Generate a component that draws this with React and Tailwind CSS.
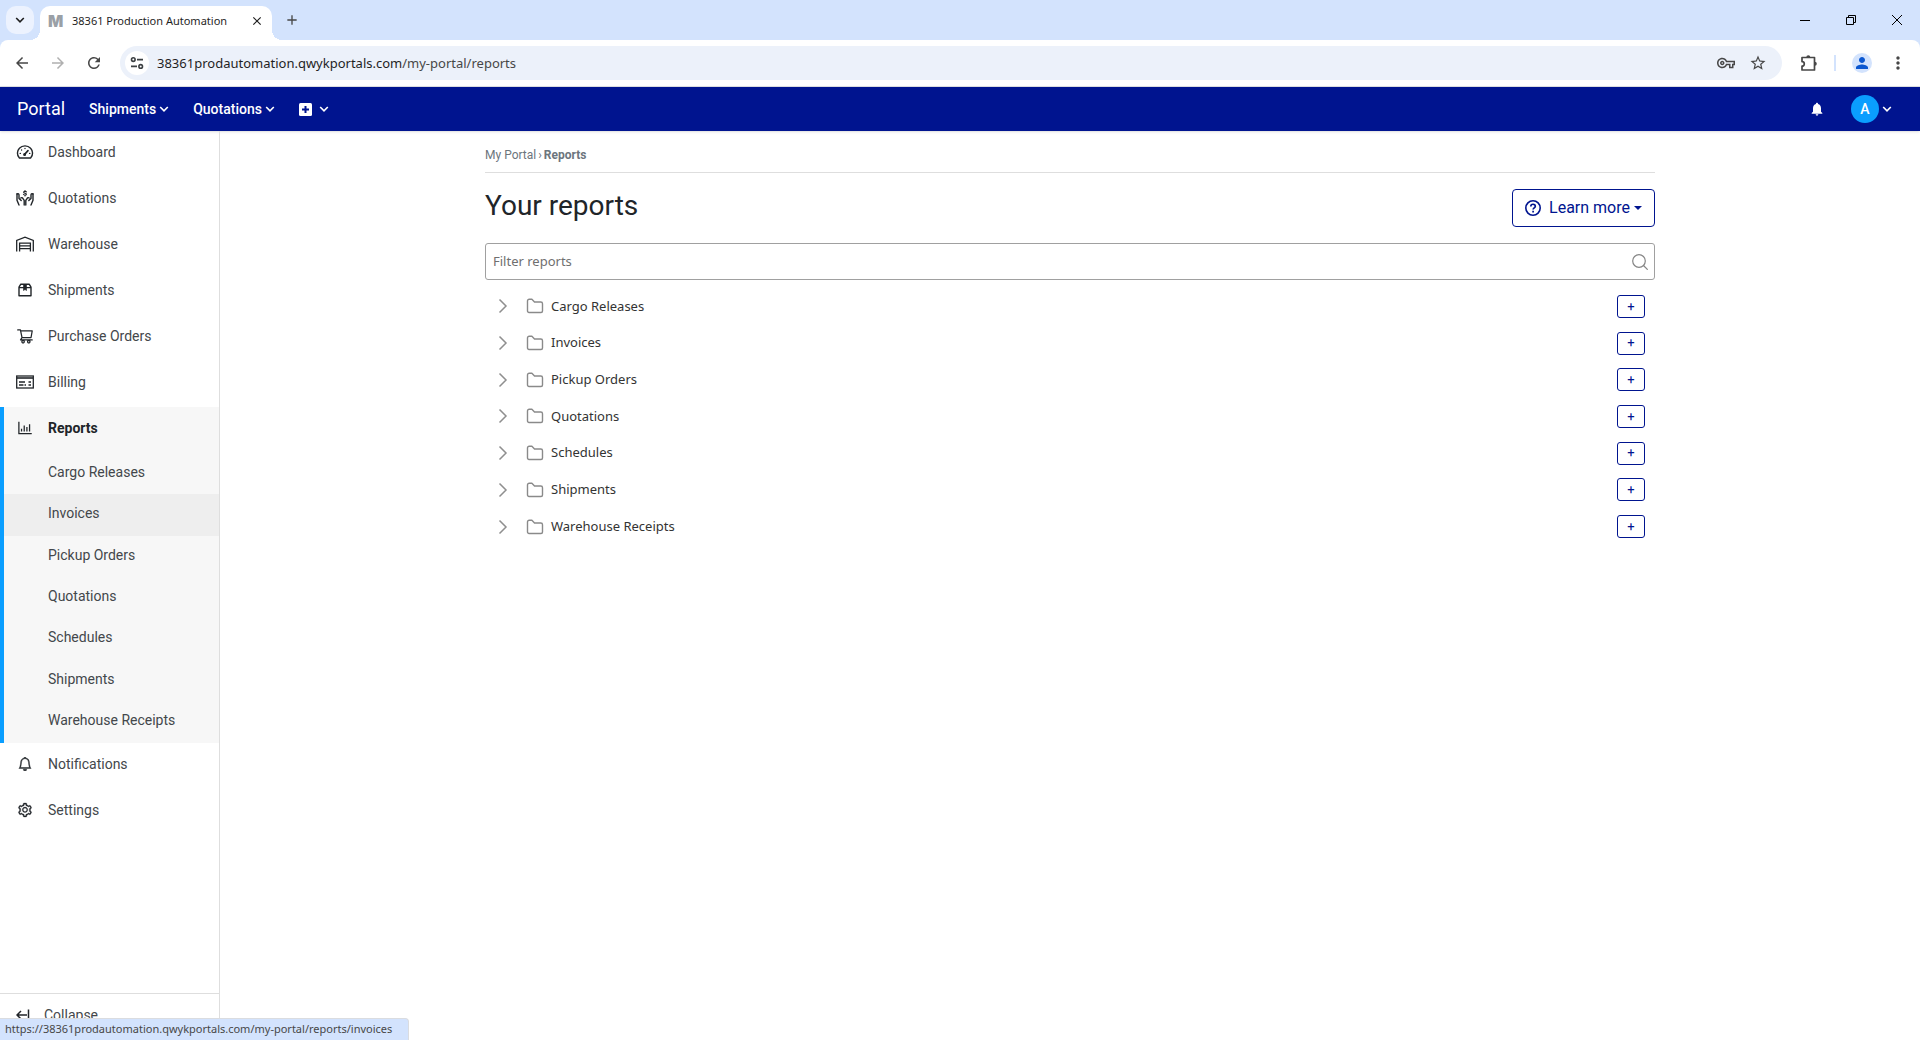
import React from "react";
import { AiOutlineShoppingCart, AiOutlineBarChart, AiOutlineSetting } from "react-icons/ai";
import { BsBell } from "react-icons/bs";
import { MdArrowBack, MdArrowForward, MdRefresh, MdOutlineVpnKey, MdStarBorder, MdMoreVert, MdPerson, MdNotifications, MdClose, MdAdd } from "react-icons/md";

const Chevron = ({ className }) => (
  <svg viewBox="0 0 10 10" className={className} fill="none" stroke="currentColor" strokeWidth="1.6">
    <path d="M1.2 3l3.8 3.8L8.8 3" />
  </svg>
);

const PlusBox = () => (
  <svg viewBox="0 0 13 13" className="size-[13px]">
    <rect width="13" height="13" rx="1.500" fill="white" />
    <path d="M6.500 3v7M3 6.500h7" stroke="#00148f" strokeWidth="2" />
  </svg>
);

const HelpIcon = () => (
  <svg viewBox="0 0 16 16" className="mr-2 size-4" fill="none" stroke="currentColor" strokeWidth="1.600">
    <circle cx="8" cy="8" r="7.200" />
    <path d="M5.800 6.500c0-3 4.500-2.900 4.500-.3 0 1.600-2.200 1.700-2.200 3.400M8.100 10.700v1.700" strokeWidth="1.700" />
  </svg>
);

const GaugeIcon = () => (
  <svg viewBox="0 0 18 16" className="h-4 w-[18px]" fill="none" stroke="currentColor" strokeWidth="1.4" strokeLinecap="round" strokeLinejoin="round">
    <path d="M3.400 14C.6 11.200 1 6.800 3.400 4.300c3-3.300 8.200-3.300 11.200 0 2.400 2.500 2.800 6.900 0 9.700z" />
    <path d="M8.600 10.400L12 6.600" strokeWidth="1.600" />
    <path d="M9 4.400v.2M5.600 6v.1M4.200 9.400h.2M13.600 9.400h.2" />
    <circle cx="8.600" cy="10.400" r="0.800" />
  </svg>
);

const QuoteIcon = () => (
  <svg viewBox="0 0 18 16" className="h-4 w-[18px]" fill="none" stroke="currentColor" strokeWidth="1.4" strokeLinecap="round" strokeLinejoin="round">
    <path d="M1 4v6.200L3 15M17 4v6.200L15 15" />
    <path d="M1 4c1.400-.6 2 .1 2 1v3.400l2.200 2.200M17 4c-1.400-.6-2 .1-2 1v3.400l-2.200 2.200" />
    <path d="M4.800 8c.8-.8 1.500-.3 2 .3l1.400 2V15M13.200 8c-.8-.8-1.500-.3-2 .3l-1.400 2V15" />
    <path d="M10.400 1.900c-.6-.8-2.800-.7-2.800.4 0 1.200 2.800.7 2.800 1.900 0 1.100-2.200 1.200-2.900.3M9 .5v.6M9 5.200v.8" strokeWidth="1.100" />
  </svg>
);

const WarehouseIcon = () => (
  <svg viewBox="0 0 18 16" className="h-4 w-[18px]" fill="none" stroke="currentColor" strokeWidth="1.300">
    <path d="M.7 15.500V4.400L9 1.200l8.300 3.200v11.100" />
    <path d="M3.600 15.500V7.200h10.800v8.300M3.600 9.900h10.800M3.600 12.700h10.800" />
  </svg>
);

const BoxIcon = () => (
  <svg viewBox="0 0 14 14" className="size-3.5" fill="none" stroke="currentColor" strokeWidth="1.4" strokeLinejoin="round">
    <path d="M1 4.200v8.600h12V4.200L11.200 1.200H2.800zM1 4.600h12" />
    <path d="M5.500 1.500h3v6L7 6.500l-1.500 1z" fill="currentColor" strokeWidth="0.600" />
  </svg>
);

const BillIcon = () => (
  <svg viewBox="0 0 18 14" className="h-3.5 w-[18px]" fill="none" stroke="currentColor" strokeWidth="1.300">
    <rect x="0.700" y="1" width="16.600" height="12" />
    <path d="M1 3h16" strokeWidth="1.600" />
    <path d="M3 7h6M3 10h4.500M8.500 10H10M12.500 7H15M12.500 10H15" />
  </svg>
);

const Tune = () => (
  <svg viewBox="0 0 14 14" className="size-3.5" fill="none" stroke="#3c4043" strokeWidth="1.600">
    <circle cx="3.300" cy="3.600" r="1.800" />
    <path d="M7 3.600h6M1 10.400h6" />
    <circle cx="10.700" cy="10.400" r="1.800" />
  </svg>
);

const Puzzle = () => (
  <svg viewBox="0 0 18 18" className="size-[18px]" fill="none" stroke="#474747" strokeWidth="1.700" strokeLinejoin="round">
    <path d="M2 3.500h12.500V16H2v-3.800a2.300 2.300 0 0 0 0-4.600z" />
    <path d="M6.300 3.200a2 2 0 0 1 4 0zM14.800 7.800a2 2 0 0 1 0 4z" fill="#474747" stroke="none" />
  </svg>
);

const Folder = () => (
  <svg viewBox="0 0 18 16" className="h-4 w-[18px] shrink-0" fill="none" stroke="#8a8a8a" strokeWidth="1.400" strokeLinejoin="round">
    <path d="M1.500 13V3a1.700 1.700 0 0 1 1.700-1.700h2.700L8.500 4h6.300a1.700 1.700 0 0 1 1.700 1.700V13a1.500 1.500 0 0 1-1.500 1.500H3A1.500 1.500 0 0 1 1.500 13z" />
  </svg>
);

const groups = ["Cargo Releases", "Invoices", "Pickup Orders", "Quotations", "Schedules", "Shipments", "Warehouse Receipts"];

const navTop = [
  ["Dashboard", <GaugeIcon />],
  ["Quotations", <QuoteIcon />],
  ["Warehouse", <WarehouseIcon />],
  ["Shipments", <BoxIcon />],
  ["Purchase Orders", <AiOutlineShoppingCart className="size-[18px]" />],
  ["Billing", <BillIcon />],
];

const navBottom = [
  ["Notifications", <BsBell className="size-3.5" strokeWidth="0.5" />],
  ["Settings", <AiOutlineSetting className="size-4" strokeWidth="20" />],
];

function NavItem({ label, icon, active }) {
  return (
    <a href="#" className={active ? "flex h-[46px] items-center pb-1 font-bold text-[#212529]" : "flex h-[46px] items-center pb-1 pl-1"}>
      <span className="ml-3 mr-3.5 flex w-[18px] shrink-0 justify-center text-[#212529]">{icon}</span>
      {label}
    </a>
  );
}

function BrowserChrome() {
  return (
    <header className="bg-[#d3e3fd] font-['Noto_Sans',sans-serif] text-[#1f1f1f]">
      <div className="flex h-10 items-end">
        <button aria-label="Search tabs" className="mb-1.5 ml-1.5 flex size-7 items-center justify-center rounded-[10px] bg-[#ecf2fe]">
          <Chevron className="size-2.5" />
        </button>
        <div className="relative ml-1.5 flex h-[34px] w-[232px] items-center rounded-t-[10px] bg-white pb-1 pl-2 pr-2 text-[11px] before:absolute before:-left-2.5 before:bottom-0 before:size-2.5 before:bg-[radial-gradient(circle_at_0_0,transparent_10px,white_10px)] after:absolute after:-right-2.5 after:bottom-0 after:size-2.5 after:bg-[radial-gradient(circle_at_100%_0,transparent_10px,white_10px)]">
          <span className="w-4 font-['Inter',sans-serif] text-base leading-4 font-black text-[#9aa0a6]">M</span>
          <span className="ml-2 grow whitespace-nowrap">38361 Production Automation</span>
          <button aria-label="Close tab"><MdClose className="size-3.5" /></button>
        </div>
        <button aria-label="New tab" className="mb-3 ml-3 text-[#474747]"><MdAdd className="size-4" /></button>
        <div className="mb-2 ml-auto flex gap-[22px] pr-[11px]">
          <button aria-label="Minimize" className="flex size-6 items-center justify-center"><svg viewBox="0 0 10 10" className="size-2.5"><path d="M0 5.500h10" stroke="black" /></svg></button>
          <button aria-label="Restore" className="flex size-6 items-center justify-center"><svg viewBox="0 0 10 10" className="size-2.5" fill="none" stroke="black"><path d="M.5 2.500h7v7h-7zM2.500 2.500v-2h7v7h-2" /></svg></button>
          <button aria-label="Close window" className="flex size-6 items-center justify-center"><svg viewBox="0 0 10 10" className="size-2.5" stroke="black"><path d="M0 0l10 10M10 0L0 10" /></svg></button>
        </div>
      </div>
      <div className="flex h-[47px] items-center rounded-t-lg border-b border-[#dfe1e5] bg-white pl-[13px] text-[#474747]">
        <button aria-label="Back"><MdArrowBack className="size-[18px]" /></button>
        <button aria-label="Forward" className="ml-[18px] text-[#b0b0b0]"><MdArrowForward className="size-[18px]" /></button>
        <button aria-label="Reload" className="ml-[18px]"><MdRefresh className="size-[18px]" /></button>
        <div className="ml-[17px] flex h-[34px] grow items-center rounded-full bg-[#ecf1fa] pl-[5px] pr-[15px]">
          <button aria-label="Site information" className="flex size-6 items-center justify-center rounded-full bg-white"><Tune /></button>
          <div className="ml-2 grow text-[13px] leading-5"><span className="text-[#1f1f1f]">38361prodautomation.qwykportals.com</span><span>/my-portal/reports</span></div>
          <button aria-label="Passwords"><MdOutlineVpnKey className="size-[18px]" /></button>
          <button aria-label="Bookmark" className="ml-3.5"><MdStarBorder className="size-[18px]" /></button>
        </div>
        <button aria-label="Extensions" className="ml-[18px]"><Puzzle /></button>
        <span className="ml-4 h-4 w-0.5 bg-[#d3e3fd]" />
        <button aria-label="Profile" className="ml-4 flex size-5 items-center justify-center rounded-full bg-[#d3e3fd] text-[#0b57d0]"><MdPerson className="size-[18px]" /></button>
        <button aria-label="Menu" className="ml-4 mr-3"><MdMoreVert className="size-5" /></button>
      </div>
    </header>
  );
}

function NavBar() {
  return (
    <nav className="flex h-11 items-center bg-[#00148f] pl-[17px] pr-7 text-sm font-medium text-white shadow">
      <a href="#" className="text-lg font-normal">Portal</a>
      <button className="ml-6 flex items-center gap-[3px]">Shipments<Chevron className="size-2.5" /></button>
      <button className="ml-6 flex items-center gap-[3px]">Quotations<Chevron className="size-2.5" /></button>
      <button aria-label="Create" className="ml-6 flex items-center gap-[7px]"><PlusBox /><Chevron className="size-2.5" /></button>
      <button aria-label="Notifications" className="ml-auto"><MdNotifications className="size-4" /></button>
      <button className="ml-[26px] flex items-center gap-[3px]"><span className="flex size-7 items-center justify-center rounded-full bg-[#0a9eff]">A</span><Chevron className="size-2.5" /></button>
    </nav>
  );
}

function Sidebar() {
  return (
    <aside className="flex w-[220px] shrink-0 flex-col border-r border-[#dedede] text-sm text-[#43474b]">
      {navTop.map(([label, icon]) => <NavItem key={label} label={label} icon={icon} />)}
      <div className="border-l-4 border-[#0a9eff] bg-[#f7f7f7]">
        <NavItem label="Reports" icon={<AiOutlineBarChart className="size-[18px]" />} active />
        <div className="grid h-[290px] grid-rows-7">
          {groups.map((g) => (
            <a key={g} href="#" className={g === "Invoices" ? "flex items-center bg-[#eeeeee] pl-11 pb-1" : "flex items-center pl-11 pb-1"}>{g}</a>
          ))}
        </div>
      </div>
      {navBottom.map(([label, icon]) => <NavItem key={label} label={label} icon={icon} />)}
      <button className="mt-auto flex h-[47px] items-center gap-3.5 border-t border-[#dedede] pb-1 pl-4">
        <svg viewBox="0 0 14 14" className="size-3.5" fill="none" stroke="#212529" strokeWidth="1.500"><path d="M12.500 1.500v11M11 7H1M5 3L1 7l4 4" /></svg>
        Collapse
      </button>
    </aside>
  );
}

function Reports() {
  return (
    <main className="grow">
      <div className="mx-auto max-w-[1170px]">
        <div className="flex h-[42px] items-center gap-0.5 border-b border-[#dedede] pt-1.5 text-xs text-[#6c757d]">
          <a href="#">My Portal</a><span>›</span><b>Reports</b>
        </div>
        <div className="mt-4 flex h-[38px] items-center justify-between">
          <h1 className="pb-1 text-[28px] leading-8 text-[#212529]">Your reports</h1>
          <button className="flex h-[38px] items-center rounded border border-[#00148f] px-3 text-base text-[#00148f]">
            <HelpIcon />Learn more
            <span className="ml-1 border-x-4 border-t-4 border-x-transparent border-t-[#00148f]" />
          </button>
        </div>
        <label className="mt-4 flex h-[37px] items-center rounded-[3px] border border-[#a0a0a0] pl-[7px] pr-1.5 font-['Noto_Sans',sans-serif] text-[13px]">
          <input aria-label="Filter reports" placeholder="Filter reports" className="grow outline-none placeholder:text-[#6f6f6f]" />
          <svg viewBox="0 0 16 16" className="size-4" fill="none" stroke="#858585" strokeWidth="1.200"><circle cx="7" cy="7" r="6.300" /><path d="M11.500 11.500L15.700 15.700" /></svg>
        </label>
        <ul className="mt-2 grid h-[257px] grid-rows-7 font-['Noto_Sans',sans-serif] text-[13px] text-[#333333]">
          {groups.map((g) => (
            <li key={g} className="flex items-center pl-3 pr-2.5">
              <button aria-label={"Expand " + g}>
                <svg viewBox="0 0 12 16" className="h-4 w-3" fill="none" stroke="#8f8f8f" strokeWidth="1.500"><path d="M2.500 1.500L9 8l-6.500 6.500" /></svg>
              </button>
              <span className="ml-[17px] mr-[7px]"><Folder /></span>
              <span className="grow">{g}</span>
              <button aria-label={"Add to " + g} className="h-[23px] w-7 rounded-[3px] border border-[#00148f] font-['Roboto',sans-serif] text-[#00148f]">+</button>
            </li>
          ))}
        </ul>
      </div>
    </main>
  );
}

export default function App() {
  return (
    <div className="flex min-h-screen flex-col bg-white font-['Roboto',sans-serif]">
      <BrowserChrome />
      <NavBar />
      <div className="flex grow">
        <Sidebar />
        <Reports />
      </div>
      <div className="fixed bottom-0 left-0 h-[22px] rounded-tr border-r border-t border-[#dadce0] bg-[#d3e3fd] pl-[5px] pr-4 font-['Noto_Sans',sans-serif] text-[11px] leading-5 text-[#474747]">
        https://38361prodautomation.qwykportals.com/my-portal/reports/invoices
      </div>
    </div>
  );
}
